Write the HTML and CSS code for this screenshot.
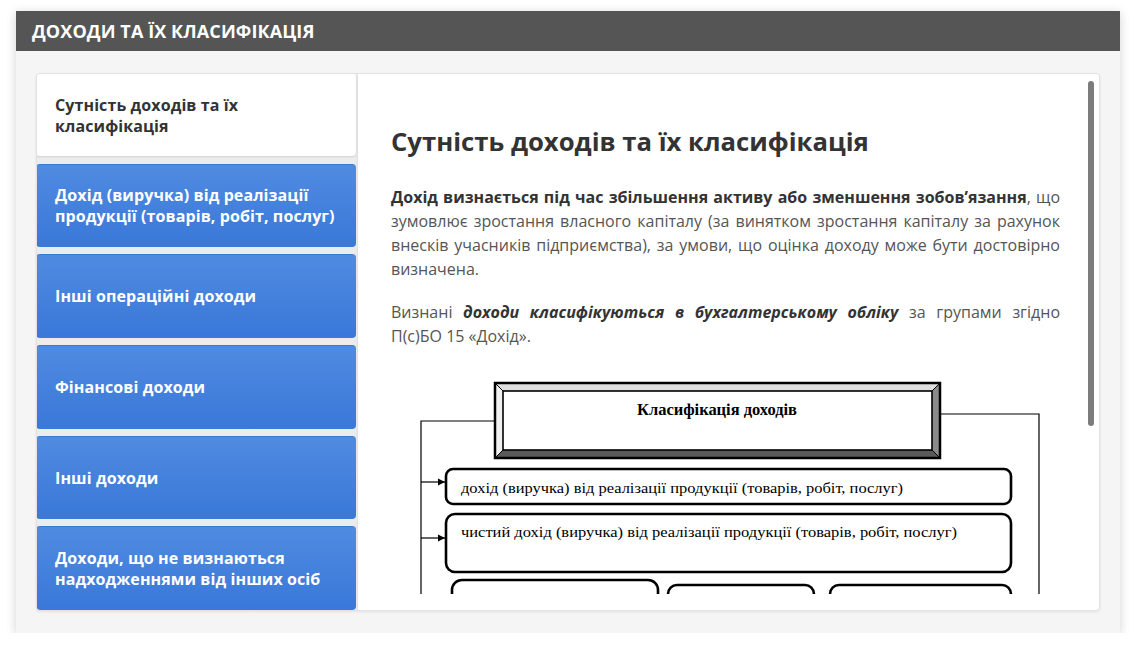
FILE: index.html
```html
<!DOCTYPE html>
<html lang="uk">
<head>
<meta charset="utf-8">
<title>Доходи та їх класифікація</title>
<link rel="stylesheet" href="styles.css">
</head>
<body>
<div class="card">
  <div class="card-header">ДОХОДИ ТА ЇХ КЛАСИФІКАЦІЯ</div>
  <div class="card-body">
    <div class="panel">
      <nav class="tabs">
        <div class="tab tab-active">Сутність доходів та їх класифікація</div>
        <div class="tab">Дохід (виручка) від реалізації продукції (товарів, робіт, послуг)</div>
        <div class="tab">Інші операційні доходи</div>
        <div class="tab">Фінансові доходи</div>
        <div class="tab">Інші доходи</div>
        <div class="tab">Доходи, що не визнаються надходженнями від інших осіб</div>
      </nav>
      <section class="content">
        <div class="scroller">
          <h2 class="title">Сутність доходів та їх класифікація</h2>
          <p class="text"><strong>Дохід визнається під час збільшення активу або зменшення зобов’язання</strong>, що зумовлює зростання власного капіталу (за винятком зростання капіталу за рахунок внесків учасників підприємства), за умови, що оцінка доходу може бути достовірно визначена.</p>
          <p class="text">Визнані <strong><em>доходи класифікуються в бухгалтерському обліку</em></strong> за групами згідно П(с)БО 15 «Дохід».</p>
          <svg class="diagram" width="668" height="300" viewBox="0 0 668 300">
            <defs>
              <marker id="arr" markerWidth="8" markerHeight="8" refX="7" refY="4" orient="auto" markerUnits="userSpaceOnUse">
                <path d="M0,0.5 L7,4 L0,7.5 Z" fill="#000"/>
              </marker>
            </defs>
            <polyline points="104,45 30,45 30,300" fill="none" stroke="#000" stroke-width="1.2"/>
            <polyline points="549,38 648,38 648,300" fill="none" stroke="#000" stroke-width="1.2"/>
            <line x1="30" y1="106" x2="54" y2="106" stroke="#000" stroke-width="1.2" marker-end="url(#arr)"/>
            <line x1="30" y1="162" x2="54" y2="162" stroke="#000" stroke-width="1.2" marker-end="url(#arr)"/>
            <polygon points="104,7 549,7 541,15 112,15" fill="#dedede"/>
            <polygon points="104,7 112,15 112,74 104,82" fill="#f0f0f0"/>
            <polygon points="549,7 549,82 541,74 541,15" fill="#8a8a8a"/>
            <polygon points="104,82 549,82 541,74 112,74" fill="#5a5a5a"/>
            <line x1="104" y1="7" x2="112" y2="15" stroke="#000" stroke-width="1"/>
            <line x1="549" y1="7" x2="541" y2="15" stroke="#000" stroke-width="1"/>
            <line x1="104" y1="82" x2="112" y2="74" stroke="#000" stroke-width="1"/>
            <line x1="549" y1="82" x2="541" y2="74" stroke="#000" stroke-width="1"/>
            <rect x="104" y="7" width="445" height="75" fill="none" stroke="#000" stroke-width="2.5"/>
            <rect x="112" y="15" width="429" height="59" fill="#fff" stroke="#000" stroke-width="1.6"/>
            <text x="326" y="39" text-anchor="middle" class="d-title" textLength="160" lengthAdjust="spacingAndGlyphs">Класифікація доходів</text>
            <rect x="55" y="93" width="565" height="35" rx="7" fill="#fff" stroke="#000" stroke-width="2.6"/>
            <text x="70" y="117" class="d-text" textLength="442" lengthAdjust="spacingAndGlyphs">дохід (виручка) від реалізації продукції (товарів, робіт, послуг)</text>
            <rect x="55" y="138" width="565" height="58" rx="9" fill="#fff" stroke="#000" stroke-width="2.6"/>
            <text x="70" y="161" class="d-text" textLength="496" lengthAdjust="spacingAndGlyphs">чистий дохід (виручка) від реалізації продукції (товарів, робіт, послуг)</text>
            <rect x="61" y="204" width="206" height="80" rx="10" fill="#fff" stroke="#000" stroke-width="2.6"/>
            <rect x="277" y="209" width="146" height="75" rx="9" fill="#fff" stroke="#000" stroke-width="2.6"/>
            <rect x="439" y="209" width="181" height="75" rx="9" fill="#fff" stroke="#000" stroke-width="2.6"/>
          </svg>
        </div>
        <div class="scroll-thumb"></div>
      </section>
    </div>
  </div>
</div>
</body>
</html>
```

FILE: styles.css
```css
* { box-sizing: border-box; }

html, body {
  margin: 0;
  padding: 0;
  background: #ffffff;
}

body {
  padding: 11px 16px 0 16px;
  font-family: "Open Sans", "Noto Sans", Arial, sans-serif;
}

.card {
  width: 1104px;
  background: #f5f5f5;
  box-shadow: 0 2px 10px rgba(0, 0, 0, 0.18);
}

.card-header {
  height: 40px;
  background: #555555;
  color: #ffffff;
  font-weight: 700;
  font-size: 18px;
  line-height: 40px;
  padding-left: 16px;
  letter-spacing: 0.1px;
}

.card-body {
  padding: 22px 20px 22px 20px;
}

.panel {
  display: flex;
  height: 538px;
  background: #ececec;
  border: 1px solid #e2e2e2;
  border-radius: 4px;
  box-shadow: 0 1px 3px rgba(0, 0, 0, 0.08);
  overflow: hidden;
}

.tabs {
  width: 320px;
  flex: none;
  display: flex;
  flex-direction: column;
  gap: 7px;
  margin-left: -1px;
  margin-top: -1px;
}

.tab {
  height: 84px;
  display: flex;
  align-items: center;
  padding: 0 12px 0 19px;
  border-radius: 4px;
  background: linear-gradient(180deg, #4f8be0 0%, #3a78d9 100%);
  border-top: 1px solid #3c79d6;
  color: #ffffff;
  font-weight: 700;
  font-size: 16px;
  line-height: 21px;
  letter-spacing: 0.1px;
}

.tab-active {
  height: 83px;
  margin-bottom: 1px;
  background: #ffffff;
  border-top: none;
  color: #333333;
  box-shadow: 0 1px 2px rgba(0, 0, 0, 0.12);
  padding-top: 3px;
  padding-right: 40px;
}

.content {
  flex: 1;
  position: relative;
  background: #ffffff;
  margin-left: 2px;
  box-shadow: -1px 0 2px rgba(0, 0, 0, 0.06);
}

.scroller {
  height: 520px;
  overflow: hidden;
  padding: 52px 39px 0 33px;
}

.scroll-thumb {
  position: absolute;
  top: 7px;
  right: 5px;
  width: 6px;
  height: 345px;
  border-radius: 3px;
  background: #7c7c7c;
}

.title {
  margin: 0 0 27px 0;
  font-size: 25.7px;
  line-height: 32px;
  font-weight: 700;
  color: #333333;
}

.text {
  margin: 0 0 19px 0;
  font-size: 16px;
  line-height: 24px;
  color: #555555;
  text-align: justify;
}

.text strong {
  color: #333333;
}

.text + .text {
  margin-bottom: 28px;
}

.diagram {
  display: block;
}

.d-title {
  font-family: "Liberation Serif", "Times New Roman", serif;
  font-weight: 700;
  font-size: 16px;
  fill: #000;
}

.d-text {
  font-family: "Liberation Serif", "Times New Roman", serif;
  font-size: 14px;
  fill: #000;
}
```
